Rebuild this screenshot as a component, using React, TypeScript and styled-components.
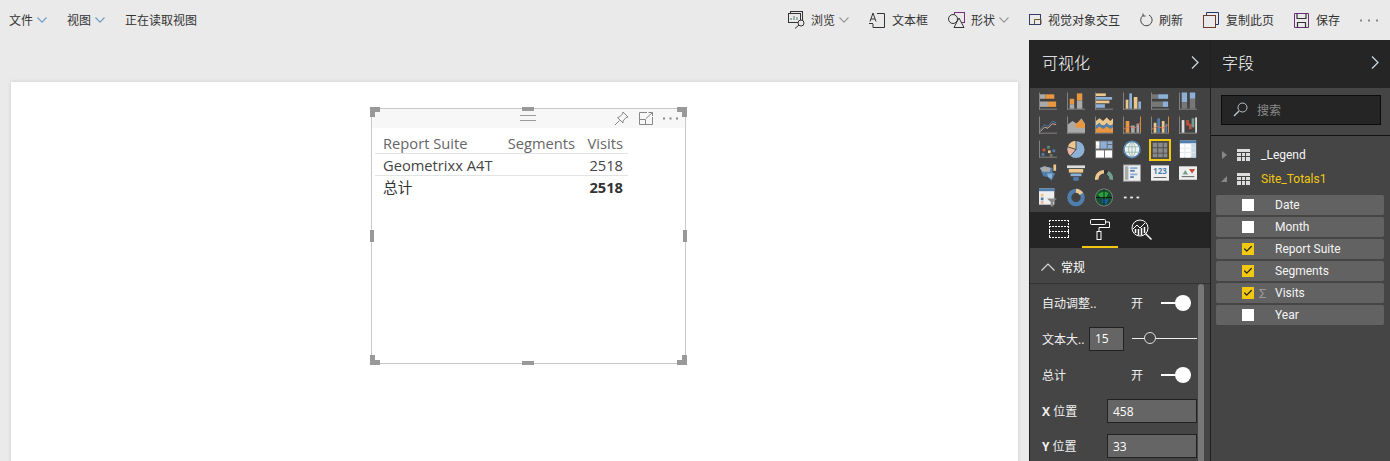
import React from "react";
import styled, { createGlobalStyle } from "styled-components";
import { Check } from "lucide-react";

const GlobalStyle = createGlobalStyle`
  html, body {
    margin: 0;
    padding: 0;
    width: 1390px;
    height: 461px;
    overflow: hidden;
    background: #eaeaea;
    font-family: "Open Sans", "Noto Sans CJK SC", sans-serif;
  }
`;

const Shell = styled.div`
  display: flex;
  flex-direction: column;
  width: 1390px;
  height: 461px;
  overflow: hidden;
`;

const Toolbar = styled.header`
  display: flex;
  align-items: center;
  justify-content: space-between;
  height: 40px;
  flex: none;
  padding: 0 12px 0 9px;
  font-size: 12px;
  color: #333;
`;

const ToolGroup = styled.div`
  display: flex;
  align-items: center;
`;

const MenuItem = styled.span`
  display: flex;
  align-items: center;
  gap: 4px;
  margin-right: 20px;
`;

const ToolItem = styled.span<{ $gap?: number }>`
  display: flex;
  align-items: center;
  gap: ${(p) => p.$gap ?? 5}px;
  margin-left: 20px;
`;

const ToolLabel = styled.span`
  display: flex;
  align-items: center;
  gap: 4px;
`;

const Body = styled.div`
  display: flex;
  flex: 1;
  min-height: 0;
`;

const CanvasArea = styled.main`
  flex: none;
  width: 1029px;
  padding: 42px 11px 0;
  box-sizing: border-box;
  overflow: hidden;
`;

const Page = styled.section`
  position: relative;
  width: 1007px;
  height: 400px;
  background: #fff;
  box-shadow: 0 0 4px rgba(0, 0, 0, 0.12);
`;

const Visual = styled.div`
  position: absolute;
  left: 360px;
  top: 26px;
  width: 315px;
  height: 256px;
  box-sizing: border-box;
  border: 1px solid #c8c8c8;
`;

const VisualHeader = styled.div`
  display: flex;
  align-items: center;
  justify-content: flex-end;
  gap: 10px;
  height: 19px;
  padding-right: 7px;
  background: #f7f7f7;
`;

const Grip = styled.div`
  position: absolute;
  left: 148px;
  top: 6px;
  width: 16px;
  height: 4px;
  border-top: 1px solid #999;
  border-bottom: 1px solid #999;
`;

const Handle = styled.i<{ $x: string; $y: string; $w: number; $h: number }>`
  position: absolute;
  width: ${(p) => p.$w}px;
  height: ${(p) => p.$h}px;
  background: #999;
  ${(p) => p.$x}
  ${(p) => p.$y}
`;

const Corner = styled.i<{ $h: "left" | "right"; $v: "top" | "bottom" }>`
  position: absolute;
  width: 10px;
  height: 10px;
  ${(p) => p.$h}: -2px;
  ${(p) => p.$v}: -2px;
  border-${(p) => p.$h}: 5px solid #999;
  border-${(p) => p.$v}: 5px solid #999;
  box-sizing: border-box;
`;

const DataTable = styled.div`
  display: grid;
  grid-template-columns: 122px 83px 48px;
  margin: 4px 0 0 3px;
  width: 253px;
  font-size: 14.7px;
  line-height: 22px;
  color: #444;
`;

const Cell = styled.div<{ $right?: boolean; $head?: boolean; $total?: boolean; $bold?: boolean }>`
  height: 22px;
  padding: 0 ${(p) => (p.$right ? 5 : 0)}px 0 ${(p) => (p.$right ? 0 : 8)}px;
  text-align: ${(p) => (p.$right ? "right" : "left")};
  white-space: nowrap;
  color: ${(p) => (p.$head ? "#666" : p.$total ? "#333" : "#444")};
  font-weight: ${(p) => (p.$bold ? 700 : 400)};
  border-bottom: ${(p) => (p.$total ? "none" : "1px solid #e3e3e3")};
  box-sizing: border-box;
`;

const PanelBase = styled.aside`
  display: flex;
  flex-direction: column;
  flex: none;
  color: #fff;
  box-sizing: border-box;
  overflow: hidden;
`;

const VizPanel = styled(PanelBase)`
  width: 182px;
  background: #454545;
  border-left: 1px solid #1f1f1f;
  border-right: 1px solid #1f1f1f;
`;

const FieldsPanel = styled(PanelBase)`
  width: 179px;
  background: #454545;
  font-family: Roboto, "Noto Sans CJK SC", sans-serif;
`;

const PanelHeader = styled.div<{ $pad: number }>`
  display: flex;
  align-items: center;
  justify-content: space-between;
  flex: none;
  height: 48px;
  box-sizing: border-box;
  padding: 0 11px 4px ${(p) => p.$pad}px;
  background: #252525;
  font-size: 16px;
  font-family: "Noto Sans CJK SC", sans-serif;
  font-weight: 300;
`;

const VizGrid = styled.div`
  display: grid;
  grid-template-columns: repeat(6, 28px);
  grid-auto-rows: 24px;
  height: 124px;
  padding: 4px 0 0 9px;
  box-sizing: border-box;
  background: #424242;
`;

const VizCell = styled.div<{ $active?: boolean }>`
  width: 18px;
  height: ${(p) => (p.$active ? 18 : 20)}px;
  margin-top: ${(p) => (p.$active ? 1 : 0)}px;
  ${(p) => p.$active && "outline: 2px solid #f2c811;"}

  svg {
    display: block;
    width: 18px;
    height: ${(p) => (p.$active ? 18 : 19)}px;
  }
`;

const TabRow = styled.div`
  display: flex;
  gap: 5px;
  height: 36px;
  flex: none;
  padding-left: 11px;
  background: #252525;
`;

const Tab = styled.div<{ $active?: boolean }>`
  display: flex;
  align-items: center;
  justify-content: center;
  width: 36px;
  height: 36px;
  box-sizing: border-box;
  border-bottom: 2px solid ${(p) => (p.$active ? "#f2c811" : "transparent")};
`;

const SectionHeader = styled.div`
  display: flex;
  align-items: center;
  gap: 6px;
  height: 36px;
  box-sizing: border-box;
  flex: none;
  padding: 3px 0 0 11px;
  font-size: 12px;
  background: #454545;
  border-bottom: 1px solid #333;
`;

const SettingsBody = styled.div`
  position: relative;
  flex: 1;
  padding-left: 12px;
`;

const ScrollBar = styled.i`
  position: absolute;
  right: 6px;
  top: 0;
  bottom: 0;
  width: 6px;
  border-radius: 3px 3px 0 0;
  background: #777;
`;

const SettingRow = styled.div<{ $h: number }>`
  display: flex;
  align-items: center;
  height: ${(p) => p.$h}px;
  font-size: 12px;
  color: #f1f1f1;
`;

const RowLabel = styled.span<{ $w: number }>`
  width: ${(p) => p.$w}px;
  flex: none;
  white-space: nowrap;
`;

const OnText = styled.span`
  width: 30px;
  flex: none;
`;

const Toggle = styled.span`
  position: relative;
  width: 30px;
  height: 2px;
  background: #fff;

  &::after {
    content: "";
    position: absolute;
    right: 0;
    top: -7px;
    width: 16px;
    height: 16px;
    border-radius: 50%;
    background: #fff;
  }
`;

const ValueBox = styled.span<{ $w: number }>`
  display: flex;
  align-items: center;
  width: ${(p) => p.$w}px;
  height: 24px;
  box-sizing: border-box;
  padding-left: 5px;
  flex: none;
  position: relative;
  z-index: 1;
  background: #656565;
  border: 1px solid #222;
  font-size: 12px;
  color: #fff;
`;

const SliderTrack = styled.span`
  position: relative;
  flex: none;
  width: 65px;
  height: 1px;
  margin-left: 8px;
  background: #eee;

  &::after {
    content: "";
    position: absolute;
    left: 12px;
    top: -6px;
    width: 12px;
    height: 12px;
    box-sizing: border-box;
    border-radius: 50%;
    border: 1px solid #ddd;
    background: #454545;
  }
`;

const SearchWrap = styled.div`
  flex: none;
  height: 48px;
  padding: 7px 9px 0 10px;
  box-sizing: border-box;
  border-bottom: 1px solid #111;
  background: #454545;
`;

const SearchBox = styled.div`
  display: flex;
  align-items: center;
  gap: 9px;
  height: 30px;
  box-sizing: border-box;
  padding: 0 0 1px 11px;
  background: #252525;
  border: 1px solid #0c0c0c;
  color: #8a8a8a;
  font-size: 12px;
`;

const TableList = styled.div`
  padding: 7px 6px 0 5px;
`;

const TableRow = styled.div<{ $open?: boolean }>`
  display: flex;
  align-items: center;
  height: 24px;
  padding-left: 5px;
  font-size: 12px;
  color: ${(p) => (p.$open ? "#f2c811" : "#f4f4f4")};
`;

const Caret = styled.i<{ $open?: boolean }>`
  width: 0;
  height: 0;
  flex: none;
  margin-right: 10px;
  ${(p) =>
    p.$open
      ? "border-bottom: 6px solid #888; border-left: 6px solid transparent;"
      : "border-left: 5px solid #888; border-top: 4px solid transparent; border-bottom: 4px solid transparent; margin-left: 1px;"}
`;

const TableName = styled.span`
  margin-left: 11px;
`;

const FieldRows = styled.div`
  display: flex;
  flex-direction: column;
  gap: 2px;
  margin-top: 4px;
`;

const FieldRow = styled.div`
  display: flex;
  align-items: center;
  height: 20px;
  padding-left: 26px;
  background: #626262;
  border-radius: 2px;
  font-size: 12px;
  color: #f4f4f4;
`;

const Box = styled.span<{ $on?: boolean }>`
  display: flex;
  align-items: center;
  justify-content: center;
  flex: none;
  width: 12px;
  height: 12px;
  background: ${(p) => (p.$on ? "#f2c811" : "#fff")};
  color: #222;
`;

const Sigma = styled.span`
  flex: none;
  width: 16px;
  margin-left: 5px;
  color: #9a9a9a;
  font-size: 13px;
`;

const FieldName = styled.span<{ $indent: number }>`
  margin-left: ${(p) => p.$indent}px;
`;

const O = "#e8963f";
const G = "#aaa";
const B = "#8db0d6";
const T = "#ecc88c";
const D = "#4f7fae";
const L = "#8a8a8a";
const R = "#e8b4a0";

const Axis = () => (
  <>
    <rect x="0" y="0" width="1" height="19" fill={L} />
    <rect x="0" y="18" width="20" height="1" fill={L} />
  </>
);

type BarDef = [number, number, number, number, string];

const Rects = ({ items }: { items: BarDef[] }) => (
  <>
    {items.map(([x, y, w, h, c], i) => (
      <rect key={i} x={x} y={y} width={w} height={h} fill={c} />
    ))}
  </>
);

const icons: React.ReactNode[] = [
  <><Axis /><Rects items={[[1, 2, 6, 5, G], [7, 2, 10, 5, O], [1, 10, 9, 6, G], [10, 10, 9, 6, O]]} /></>,
  <><Axis /><Rects items={[[3, 7, 5, 6, O], [3, 13, 5, 5, G], [11, 1, 6, 8, O], [11, 9, 6, 9, G]]} /></>,
  <><Axis /><Rects items={[[1, 1, 11, 3, T], [1, 5, 18, 3, B], [1, 9, 15, 3, T], [1, 13, 10, 4, B]]} /></>,
  <><Axis /><Rects items={[[3, 8, 3, 10, T], [7, 1, 3, 17, B], [12, 5, 4, 13, T], [17, 10, 3, 8, B]]} /></>,
  <><Axis /><Rects items={[[1, 2, 7, 5, "#777"], [8, 2, 11, 5, B], [1, 10, 12, 6, "#777"], [13, 10, 6, 6, B]]} /></>,
  <><Axis /><Rects items={[[3, 0, 6, 11, B], [3, 11, 6, 7, "#777"], [12, 0, 6, 7, B], [12, 7, 6, 11, "#777"]]} /></>,
  <><Axis /><path d="M1 15 L6 9 L10 11 L15 5 L19 7" fill="none" stroke={D} /><path d="M1 17 L6 12 L10 13 L15 8 L19 9" fill="none" stroke={R} /></>,
  <><Axis /><path d="M1 9 L6 5 L11 8 L16 2 L20 8 V18 H1 Z" fill={G} /><path d="M9 9 L16 3 L20 9 V13 L9 12 Z" fill={O} /></>,
  <><Axis /><path d="M1 5 L5 2 L9 5 L13 1 L17 5 L20 2 V10 H1 Z" fill={T} /><path d="M1 10 L5 7 L9 11 L13 7 L17 11 L20 8 V14 L1 14 Z" fill={D} /><path d="M1 14 L5 11 L9 14 L13 11 L17 14 L20 12 V18 H1 Z" fill={O} /></>,
  <><Axis /><Rects items={[[3, 5, 4, 13, O], [9, 10, 4, 8, G], [15, 8, 3, 10, G], [19, 0, 1, 18, O]]} /><path d="M1 14 L7 11 L13 13 L19 7" fill="none" stroke="#d9705a" /></>,
  <><Axis /><Rects items={[[3, 7, 3, 11, T], [7, 2, 3, 16, D], [12, 5, 3, 13, T], [16, 8, 2, 10, D], [19, 0, 1, 18, O]]} /><path d="M1 14 L7 11 L13 13 L19 9" fill="none" stroke="#d9705a" /></>,
  <><Axis /><Rects items={[[3, 4, 3, 14, "#ddd"], [8, 4, 3, 6, "#c0503c"], [11, 8, 3, 6, "#c0503c"], [14, 2, 3, 10, "#6f9f8f"], [18, 1, 2, 17, "#ddd"]]} /></>,
  <><Axis /><Rects items={[[4, 9, 3, 3, "#cc5a3c"], [9, 6, 3, 3, "#5b8e7d"], [3, 14, 3, 3, D], [10, 11, 3, 3, T], [15, 10, 3, 3, D], [12, 15, 3, 3, "#777"]]} /></>,
  <><circle cx="10" cy="10" r="9.5" fill={B} /><path d="M10 10 L10 0.5 A9.5 9.5 0 0 0 1 7 Z" fill={T} /><path d="M10 10 L1 7 A9.5 9.5 0 0 0 4 17 Z" fill={R} /><path d="M10 0 V10 M10 10 L1 7 M10 10 L4 17" stroke="#424242" strokeWidth="1" /></>,
  <><rect x="0" y="0" width="20" height="20" fill="#666" /><Rects items={[[1, 1, 4, 4, "#fff"], [1, 5, 4, 4, "#eee"], [6, 1, 7, 8, B], [14, 1, 5, 3, B], [14, 5, 5, 4, B], [1, 11, 9, 8, "#fff"], [11, 11, 8, 8, "#fff"]]} /></>,
  <><circle cx="10" cy="10" r="9" fill="#eef4f4" stroke={D} strokeWidth="1.8" /><path d="M1 7 H19 M1 13 H19 M10 1 V19 M10 1 C5 6 5 14 10 19 M10 1 C15 6 15 14 10 19" stroke="#86a99a" fill="none" strokeWidth="0.8" /></>,
  <><rect x="0" y="0" width="20" height="20" fill="#4a4a4a" /><Rects items={[[2, 2, 5, 5, "#8a8a8a"], [8, 2, 5, 5, "#8a8a8a"], [14, 2, 4, 5, "#8a8a8a"], [2, 8, 5, 5, "#8a8a8a"], [8, 8, 5, 5, "#8a8a8a"], [14, 8, 4, 5, "#8a8a8a"], [2, 14, 5, 4, "#8a8a8a"], [8, 14, 5, 4, "#8a8a8a"], [14, 14, 4, 4, "#8a8a8a"]]} /></>,
  <><rect x="1" y="0" width="18" height="19" fill="#dfe6ee" /><Rects items={[[1, 0, 18, 3, D], [1, 4, 5, 4, "#fff"], [7, 4, 6, 4, "#fff"], [14, 4, 5, 4, "#c9d6e4"], [1, 9, 5, 4, "#fff"], [7, 9, 6, 4, "#fff"], [14, 9, 5, 4, "#c9d6e4"], [1, 14, 5, 5, "#fff"], [7, 14, 6, 5, "#fff"], [14, 14, 5, 5, "#c9d6e4"]]} /></>,
  <><path d="M1 4 L6 2 L15 4 L15 9 L18 10 L14 18 L10 14 L5 13 L3 9 Z" fill={D} /><path d="M1 4 L6 2 L13 4 L12 8 L4 8 Z" fill="#aaa" /><path d="M9 10 L15 10 L14 16 L10 14 Z" fill={B} /><rect x="16" y="0" width="3" height="7" fill={T} /></>,
  <><Rects items={[[0, 1, 20, 3, "#ddd"], [2, 5, 16, 4, T], [4, 10, 12, 3, B], [7, 14, 6, 4, D]]} /></>,
  <><path d="M2 17 A8 8 0 0 1 10 8" fill="none" stroke={T} strokeWidth="4" /><path d="M10 8 A8 8 0 0 1 14 9" fill="none" stroke="#333" strokeWidth="4" /><path d="M14 9 A8 8 0 0 1 18 17" fill="none" stroke="#6f9f8f" strokeWidth="4" /></>,
  <><rect x="0.5" y="0.5" width="19" height="18" fill="#eee" stroke="#999" /><Rects items={[[2, 2, 4, 15, "#aaa"], [8, 3, 8, 2, B], [8, 6, 5, 2, D], [8, 10, 8, 2, B], [8, 13, 4, 2, D]]} /></>,
  <><rect x="0" y="1" width="20" height="17" fill="#eee" /><text x="10" y="11" textAnchor="middle" fontSize="9" fontWeight="700" fontFamily="Open Sans, sans-serif" fill={D}>123</text><rect x="3" y="14" width="14" height="1" fill="#555" /></>,
  <><rect x="0" y="2" width="20" height="15" fill="#eee" /><path d="M4 11 L7 6 L10 11 Z" fill="#6f9f8f" /><path d="M11 5 H18 L14.5 10 Z" fill="#c0503c" /><rect x="3" y="13" width="14" height="1" fill="#555" /></>,
  <><rect x="0" y="0" width="17" height="18" fill="#eee" /><Rects items={[[0, 0, 17, 3, D], [2, 6, 3, 3, T], [2, 10, 3, 3, D], [2, 14, 3, 3, R]]} /><path d="M9 11 H20 L16 15 V20 H13 V15 Z" fill="#888" /></>,
  <><circle cx="10" cy="10" r="7.5" fill="none" stroke={D} strokeWidth="4.5" /><path d="M10 2.5 A7.5 7.5 0 0 1 16 6" fill="none" stroke={T} strokeWidth="4.5" /></>,
  <><circle cx="10" cy="10" r="9.5" fill="#14502f" stroke="#888" /><path d="M3 6 L10 3 L15 5 L12 11 L6 10 Z" fill="#2e9e3e" /><path d="M8 12 L15 12 L12 18 L8 16 Z" fill="#1c5fa8" /><path d="M1 10 H19 M10 1 V19" stroke="#0a0a0a" strokeWidth="0.8" /></>,
  <><Rects items={[[1, 9, 3, 2, "#eee"], [8, 9, 3, 2, "#eee"], [15, 9, 3, 2, "#eee"]]} /></>,
];

const Chevron = ({ color = "#9a9a9a" }: { color?: string }) => (
  <svg width="10" height="6" viewBox="0 0 10 6" fill="none" stroke={color} strokeWidth="1.1">
    <path d="M0.5 0.5 L5 5.2 L9.5 0.5" />
  </svg>
);

const PanelArrow = () => (
  <svg width="8" height="13" viewBox="0 0 8 13" fill="none" stroke="#c9d4de" strokeWidth="1.3">
    <path d="M1 0.5 L7 6.5 L1 12.5" />
  </svg>
);

const UpArrow = () => (
  <svg width="14" height="8" viewBox="0 0 14 8" fill="none" stroke="#ddd" strokeWidth="1.1">
    <path d="M0.5 7.5 L7 1 L13.5 7.5" />
  </svg>
);

const Dots = ({ color, width }: { color: string; width: number }) => (
  <svg width={width} height="3" viewBox={`0 0 ${width} 3`} fill={color}>
    <rect x="0" y="0.5" width="2" height="2" />
    <rect x={(width - 2) / 2} y="0.5" width="2" height="2" />
    <rect x={width - 2} y="0.5" width="2" height="2" />
  </svg>
);

const FieldsIcon = () => (
  <svg width="20" height="18" viewBox="0 0 20 18" fill="none" stroke="#fff" strokeDasharray="2 1">
    <path d="M0 0.5 H20 M0 6.5 H20 M0 11.5 H20 M0 17.5 H20 M0.5 0 V18 M19.5 0 V18" />
  </svg>
);

const RollerIcon = () => (
  <svg width="20" height="22" viewBox="0 0 20 22" fill="none" stroke="#fff">
    <rect x="0.5" y="1.5" width="15" height="5" rx="1" />
    <path d="M15.5 4 H19.5 V9.5 H9 V13" />
    <rect x="7" y="13.5" width="4" height="8" />
  </svg>
);

const AnalyticsIcon = () => (
  <svg width="21" height="21" viewBox="0 0 21 21" fill="none" stroke="#fff">
    <circle cx="9" cy="9" r="8" />
    <path d="M14.5 14.5 L20.5 20.5" strokeWidth="1.5" />
    <path d="M2 10 L6 6 L9 9 L14 4" />
    <path d="M4.5 14 V10 M7.5 16 V10 M10.5 16 V9 M13.5 14 V8" strokeWidth="1.5" />
  </svg>
);

const GridGlyph = () => (
  <svg width="13" height="12" viewBox="0 0 13 12" style={{ flex: "none" }}>
    <rect width="13" height="12" fill="#ddd" />
    <path d="M0 3.5 H13 M0 7.5 H13 M4.5 3 V12 M8.5 3 V12" stroke="#454545" />
  </svg>
);

const SearchGlyph = () => (
  <svg width="15" height="15" viewBox="0 0 15 15" fill="none" stroke="#b8c4cc">
    <circle cx="9.5" cy="5.5" r="4.5" />
    <path d="M6 9 L1 14" strokeWidth="1.4" />
  </svg>
);

const BrowseIcon = () => (
  <svg width="18" height="18" viewBox="0 0 18 18" fill="none" stroke="#333">
    <rect x="2.5" y="0.5" width="12" height="9" />
    <rect x="0.5" y="2.5" width="12" height="9" fill="#eaeaea" />
    <path d="M3 9 V7 M6 9 V5 M9 9 V6" stroke="#4a7a6a" />
    <circle cx="13" cy="12" r="3" fill="#eaeaea" />
    <path d="M11 14 L7 17.5" />
  </svg>
);

const TextBoxIcon = () => (
  <svg width="16" height="17" viewBox="0 0 16 17" fill="none" stroke="#333">
    <path d="M8 1.5 H15.5 V15.5 H4 V12" />
    <path d="M0 11.5 H4 M1 9.5 L4 1 L7 9.5 M2 7 H6" />
  </svg>
);

const ShapesIcon = () => (
  <svg width="18" height="17" viewBox="0 0 18 17" fill="none" stroke="#333">
    <rect x="6.5" y="0.5" width="10" height="10" stroke="#7a2d7a" />
    <circle cx="5" cy="7" r="4.5" fill="#eaeaea" />
    <path d="M11 6 L16 15.5 H6 Z" fill="#eaeaea" />
  </svg>
);

const InteractIcon = () => (
  <svg width="13" height="12" viewBox="0 0 13 12" fill="none" stroke="#3a3a6a">
    <rect x="0.5" y="0.5" width="11" height="10" />
    <path d="M5.5 10 V5.5 H12 V10" stroke="#6a5a2a" />
  </svg>
);

const RefreshIcon = () => (
  <svg width="13" height="14" viewBox="0 0 13 14" fill="none" stroke="#444">
    <path d="M3 2.5 A5.7 5.7 0 1 0 9 2" />
    <path d="M3 0.5 V3 H5.5" />
  </svg>
);

const CopyIcon = () => (
  <svg width="16" height="16" viewBox="0 0 16 16" fill="none" stroke="#222">
    <path d="M3.5 3 V0.5 H15.5 V12.5 H12" stroke="#27346b" />
    <rect x="0.5" y="3.5" width="12" height="12" stroke="#6c3a2a" />
  </svg>
);

const SaveIcon = () => (
  <svg width="15" height="15" viewBox="0 0 15 15" fill="none" stroke="#333">
    <path d="M0.5 0.5 H14.5 V14.5 H0.5 Z" stroke="#6b2f7a" />
    <path d="M3 0.5 V5.5 H12 V0.5 M3.5 14.5 V9.5 H11.5 V14.5" strokeWidth="1.2" />
  </svg>
);

const PinIcon = () => (
  <svg width="15" height="15" viewBox="0 0 15 15" fill="none" stroke="#888">
    <path d="M9 1 L14 6 L12 6.5 L9 10 L9 12 L3.5 6.5 L5.5 6 L8.5 3 Z" />
    <path d="M5.5 9.5 L1 14" />
  </svg>
);

const FocusIcon = () => (
  <svg width="14" height="13" viewBox="0 0 14 13" fill="none" stroke="#888">
    <path d="M8 0.5 H0.5 V12.5 H13.5 V5" />
    <path d="M7 6.5 L13.5 0.5 M9.5 0.5 H13.5 V4 M0.5 7.5 H6.5 V12.5" />
  </svg>
);

const fields = [
  { name: "Date" },
  { name: "Month" },
  { name: "Report Suite", on: true },
  { name: "Segments", on: true },
  { name: "Visits", on: true, sum: true },
  { name: "Year" },
];

export default function App() {
  return (
    <Shell>
      <GlobalStyle />
      <Toolbar>
        <ToolGroup>
          <MenuItem>文件<Chevron color="#6b9bc4" /></MenuItem>
          <MenuItem>视图<Chevron color="#6b9bc4" /></MenuItem>
          <MenuItem>正在读取视图</MenuItem>
        </ToolGroup>
        <ToolGroup>
          <ToolItem><BrowseIcon /><ToolLabel>浏览<Chevron /></ToolLabel></ToolItem>
          <ToolItem $gap={7}><TextBoxIcon />文本框</ToolItem>
          <ToolItem><ShapesIcon /><ToolLabel>形状<Chevron /></ToolLabel></ToolItem>
          <ToolItem $gap={6}><InteractIcon />视觉对象交互</ToolItem>
          <ToolItem $gap={6}><RefreshIcon />刷新</ToolItem>
          <ToolItem $gap={7}><CopyIcon />复制此页</ToolItem>
          <ToolItem $gap={7}><SaveIcon />保存</ToolItem>
          <ToolItem><Dots color="#888" width={18} /></ToolItem>
        </ToolGroup>
      </Toolbar>
      <Body>
        <CanvasArea>
          <Page>
            <Visual>
              <Corner $h="left" $v="top" />
              <Corner $h="right" $v="top" />
              <Corner $h="left" $v="bottom" />
              <Corner $h="right" $v="bottom" />
              <Handle $w={12} $h={4} $x="left: 150px;" $y="top: -2px;" />
              <Handle $w={12} $h={4} $x="left: 150px;" $y="bottom: -2px;" />
              <Handle $w={4} $h={12} $x="left: -2px;" $y="top: 121px;" />
              <Handle $w={4} $h={12} $x="right: -2px;" $y="top: 121px;" />
              <Grip />
              <VisualHeader>
                <PinIcon />
                <FocusIcon />
                <Dots color="#888" width={15} />
              </VisualHeader>
              <DataTable>
                <Cell $head>Report Suite</Cell>
                <Cell $head $right>Segments</Cell>
                <Cell $head $right>Visits</Cell>
                <Cell>Geometrixx A4T</Cell>
                <Cell />
                <Cell $right>2518</Cell>
                <Cell $total>总计</Cell>
                <Cell $total />
                <Cell $total $bold $right>2518</Cell>
              </DataTable>
            </Visual>
          </Page>
        </CanvasArea>
        <VizPanel>
          <PanelHeader $pad={12}>可视化<PanelArrow /></PanelHeader>
          <VizGrid>
            {icons.map((icon, i) => (
              <VizCell key={i} $active={i === 16}>
                <svg viewBox="0 0 20 20">{icon}</svg>
              </VizCell>
            ))}
          </VizGrid>
          <TabRow>
            <Tab><FieldsIcon /></Tab>
            <Tab $active><RollerIcon /></Tab>
            <Tab><AnalyticsIcon /></Tab>
          </TabRow>
          <SectionHeader><UpArrow />常规</SectionHeader>
          <SettingsBody>
            <ScrollBar />
            <SettingRow $h={38}>
              <RowLabel $w={89}>自动调整..</RowLabel><OnText>开</OnText><Toggle />
            </SettingRow>
            <SettingRow $h={33}>
              <RowLabel $w={47}>文本大..</RowLabel><ValueBox $w={35}>15</ValueBox><SliderTrack />
            </SettingRow>
            <SettingRow $h={39}>
              <RowLabel $w={89}>总计</RowLabel><OnText>开</OnText><Toggle />
            </SettingRow>
            <SettingRow $h={34}>
              <RowLabel $w={65}><b>X</b> 位置</RowLabel><ValueBox $w={90}>458</ValueBox>
            </SettingRow>
            <SettingRow $h={36}>
              <RowLabel $w={65}><b>Y</b> 位置</RowLabel><ValueBox $w={90}>33</ValueBox>
            </SettingRow>
          </SettingsBody>
        </VizPanel>
        <FieldsPanel>
          <PanelHeader $pad={11}>字段<PanelArrow /></PanelHeader>
          <SearchWrap>
            <SearchBox><SearchGlyph />搜索</SearchBox>
          </SearchWrap>
          <TableList>
            <TableRow>
              <Caret /><GridGlyph /><TableName>_Legend</TableName>
            </TableRow>
            <TableRow $open>
              <Caret $open /><GridGlyph /><TableName>Site_Totals1</TableName>
            </TableRow>
            <FieldRows>
              {fields.map((f) => (
                <FieldRow key={f.name}>
                  <Box $on={f.on}>{f.on && <Check size={10} strokeWidth={3} />}</Box>
                  {f.sum && <Sigma>Σ</Sigma>}
                  <FieldName $indent={f.sum ? 0 : 21}>{f.name}</FieldName>
                </FieldRow>
              ))}
            </FieldRows>
          </TableList>
        </FieldsPanel>
      </Body>
    </Shell>
  );
}
